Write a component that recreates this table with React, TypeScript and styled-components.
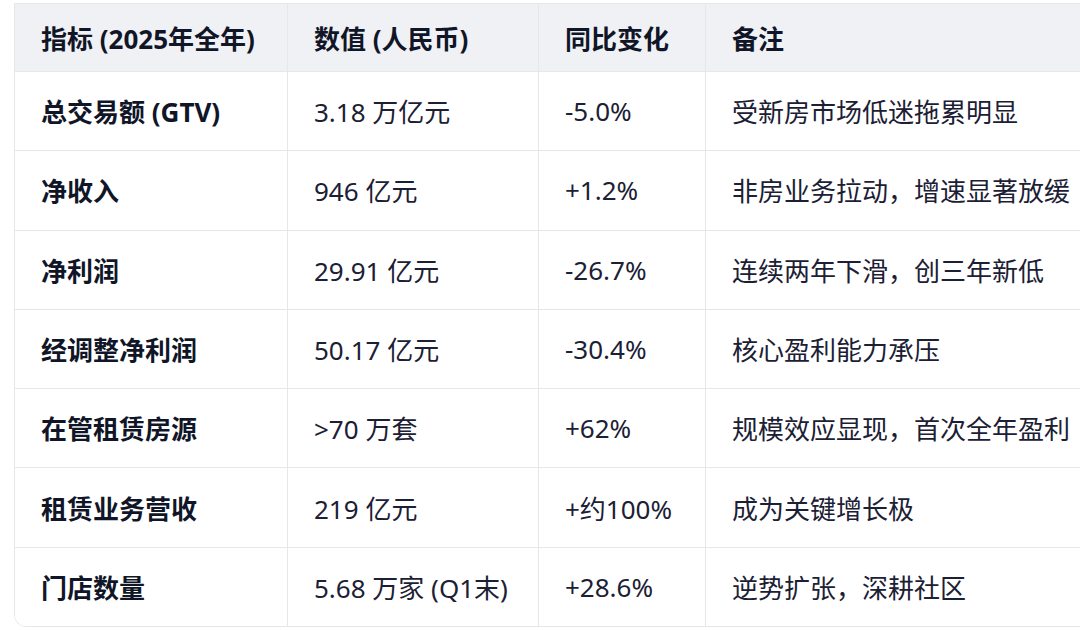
import React from 'react';
import styled, { createGlobalStyle } from 'styled-components';

const GlobalStyle = createGlobalStyle`
  html, body {
    margin: 0;
    padding: 0;
    background: #ffffff;
    overflow: hidden;
  }
  body {
    font-family: "Noto Sans", "Noto Sans CJK SC", sans-serif;
  }
`;

const Page = styled.div`
  padding: 3px 0 0 14px;
  width: 1100px;
`;

const TableBox = styled.div`
  width: 1075px;
  border: 1px solid #e6e7eb;
  border-radius: 0 0 12px 12px;
  overflow: hidden;
  display: grid;
  grid-template-columns: 273px 251px 167px 1fr;
`;

const Cell = styled.div<{ $head?: boolean; $last?: boolean; $edge?: boolean }>`
  box-sizing: border-box;
  height: ${p => (p.$head ? 68 : p.$last ? 78.4 : 79.3)}px;
  padding: 0 26px 0 26px;
  display: flex;
  align-items: center;
  white-space: nowrap;
  font-size: 26px;
  font-family: "Noto Sans", "Noto Sans CJK SC", sans-serif;
  font-weight: ${p => (p.$head ? 700 : 400)};
  color: ${p => (p.$head ? '#101628' : '#1b2034')};
  background: ${p => (p.$head ? '#f0f1f4' : '#ffffff')};
  border-right: ${p => (p.$edge ? 'none' : '1px solid #e6e7eb')};
  border-bottom: ${p => (p.$last ? 'none' : '1px solid #e6e7eb')};
`;

const NameCell = styled(Cell)`
  font-weight: 700;
  color: #101628;
`;

const headers = ['指标 (2025年全年)', '数值 (人民币)', '同比变化', '备注'];

const rows: [string, string, string, string][] = [
  ['总交易额 (GTV)', '3.18 万亿元', '-5.0%', '受新房市场低迷拖累明显'],
  ['净收入', '946 亿元', '+1.2%', '非房业务拉动，增速显著放缓'],
  ['净利润', '29.91 亿元', '-26.7%', '连续两年下滑，创三年新低'],
  ['经调整净利润', '50.17 亿元', '-30.4%', '核心盈利能力承压'],
  ['在管租赁房源', '>70 万套', '+62%', '规模效应显现，首次全年盈利'],
  ['租赁业务营收', '219 亿元', '+约100%', '成为关键增长极'],
  ['门店数量', '5.68 万家 (Q1末)', '+28.6%', '逆势扩张，深耕社区'],
];

export default function App() {
  return (
    <>
      <GlobalStyle />
      <Page>
        <TableBox>
          {headers.map((h, i) => (
            <Cell key={h} $head $edge={i === 3}>{h}</Cell>
          ))}
          {rows.map((r, ri) => {
            const last = ri === rows.length - 1;
            return (
              <React.Fragment key={r[0]}>
                <NameCell $last={last}>{r[0]}</NameCell>
                <Cell $last={last}>{r[1]}</Cell>
                <Cell $last={last}>{r[2]}</Cell>
                <Cell $last={last} $edge>{r[3]}</Cell>
              </React.Fragment>
            );
          })}
        </TableBox>
      </Page>
    </>
  );
}
